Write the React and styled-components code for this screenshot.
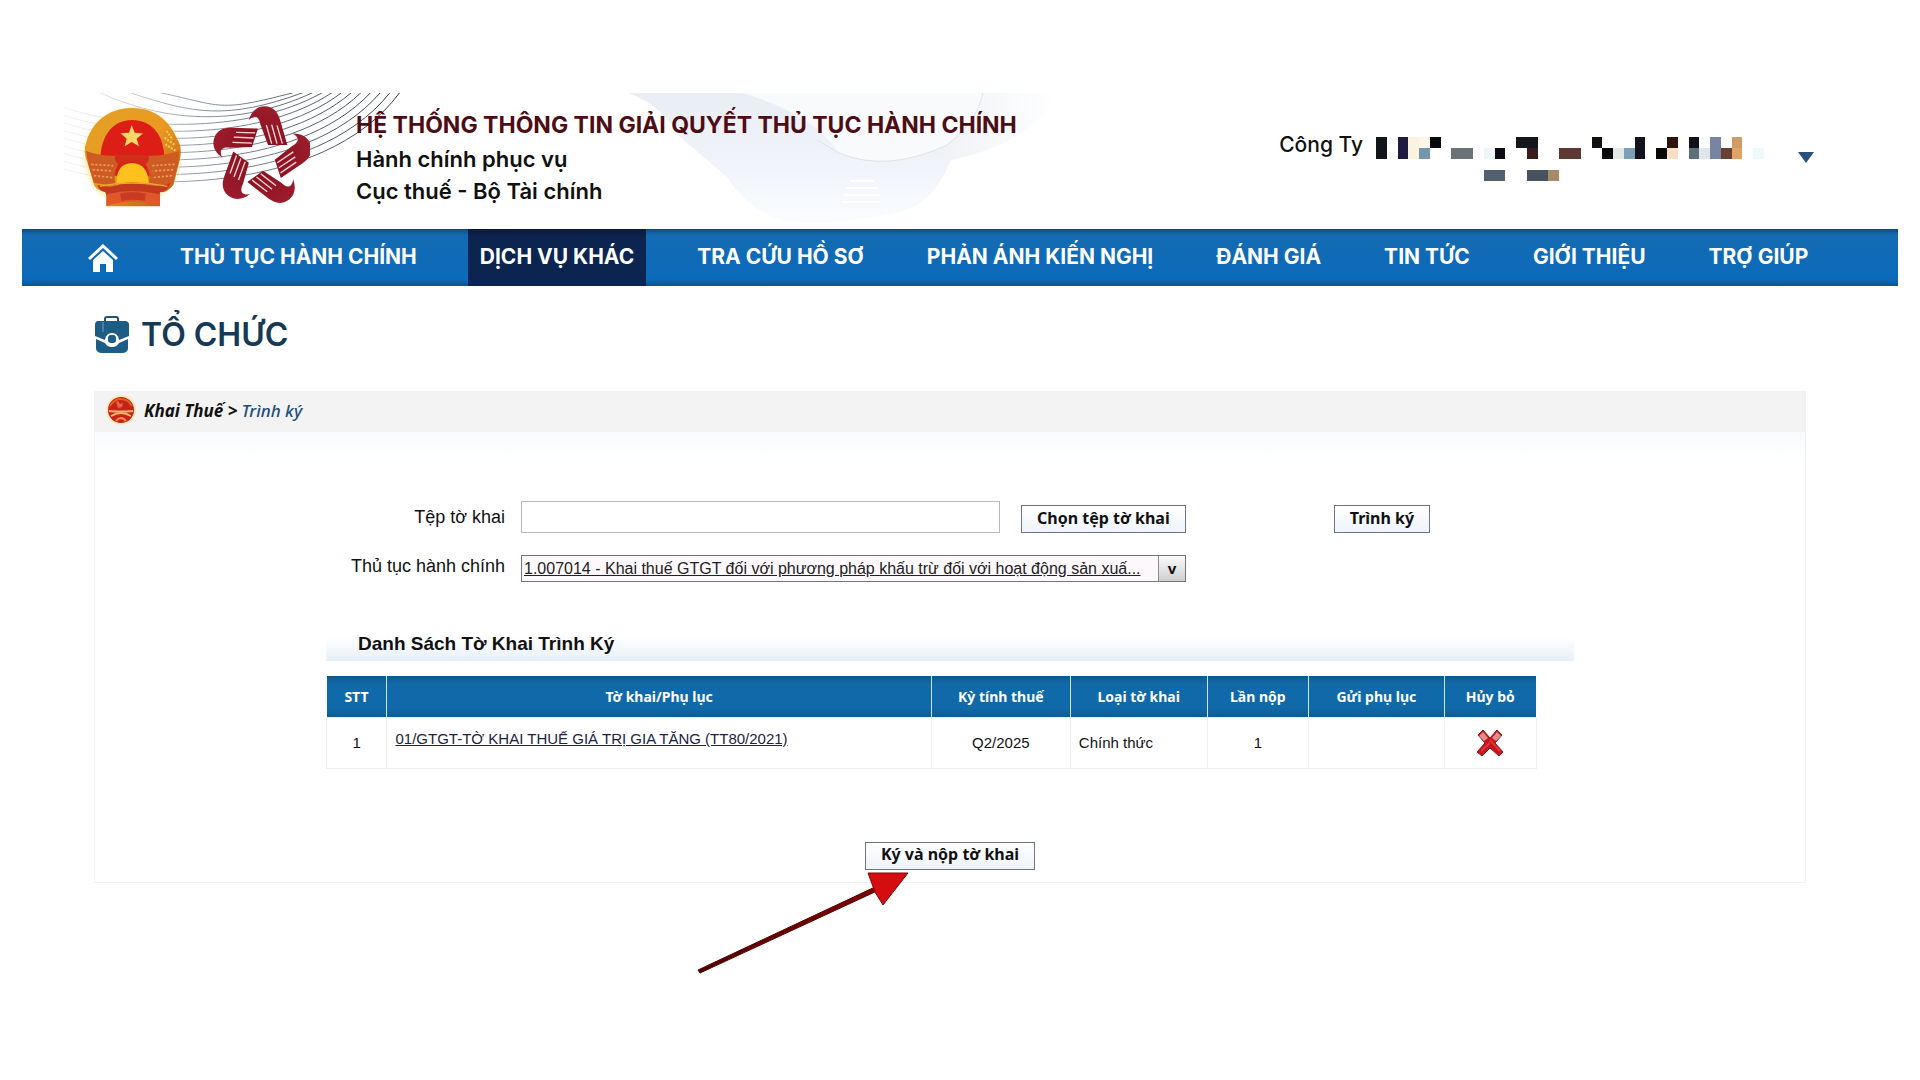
import React from 'react'
import styled, { createGlobalStyle } from "styled-components";

const menus = [
    "THỦ TỤC HÀNH CHÍNH",
    "DỊCH VỤ KHÁC",
    "TRA CỨU HỒ SƠ",
    "PHẢN ÁNH KIẾN NGHỊ",
    "ĐÁNH GIÁ",
    "TIN TỨC",
    "GIỚI THIỆU",
    "TRỢ GIÚP",
]

const columns = [
    { label: "STT", width: "5%" },
    { label: "Tờ khai/Phụ lục", width: "45%" },
    { label: "Kỳ tính thuế", width: "11.5%" },
    { label: "Loại tờ khai", width: "11.3%" },
    { label: "Lần nộp", width: "8.4%" },
    { label: "Gửi phụ lục", width: "11.2%" },
    { label: "Hủy bỏ", width: "7.6%" },
]

// [column, row, width, height, color]
const mosaic = [
    [0, 0, 1, 2, "#12151a"], [2, 0, 1, 2, "#1d1b42"], [3, 0, 1, 2, "#fbf3df"], [4, 0, 1, 1, "#fdf8ea"],
    [4, 1, 1, 1, "#7497ae"], [5, 0, 1, 1, "#08090c"], [7, 1, 2, 1, "#6a7276"], [10, 1, 1, 1, "#eff6f9"],
    [11, 1, 1, 1, "#0c0c12"], [13, 0, 2, 1, "#15151c"], [14, 1, 1, 1, "#3a1b1d"], [17, 1, 2, 1, "#5c3a33"],
    [20, 0, 1, 1, "#14100f"], [21, 1, 1, 1, "#08090c"], [22, 1, 1, 1, "#e3e8e4"], [23, 1, 1, 1, "#7d9fb8"],
    [24, 0, 1, 2, "#12131c"], [26, 1, 1, 1, "#0b0707"], [27, 0, 1, 1, "#2c1310"], [27, 1, 1, 1, "#fbdcc4"],
    [29, 0, 1, 1, "#0f1218"], [29, 1, 1, 1, "#5c6d7c"], [30, 1, 1, 1, "#dfe6ea"], [31, 0, 1, 2, "#7785a3"],
    [32, 1, 1, 1, "#6a4034"], [33, 0, 1, 1, "#cf9c66"], [33, 1, 1, 1, "#e0a468"], [35, 1, 1, 1, "#eef9fc"],
    [10, 3, 2, 1, "#526070"], [14, 3, 2, 1, "#47535f"], [16, 3, 1, 1, "#a88a66"],
]

function HeaderArt() {
    const lines = []
    for (let i = 0; i < 12; i++) {
        const y = 68 + i * 23
        const end = 700 + i * 29
        const x = i < 3 ? 300 - i * 90 : 10
        lines.push(`M${x} ${i < 3 ? 38 : y - 55} C${x + 190} ${y + 10} ${end - 230} ${y + 30} ${end} 38`)
    }
    return (
        <Art viewBox="0 0 1040 136" aria-hidden="true">
            <defs>
                <linearGradient id="wave" gradientUnits="userSpaceOnUse" x1="0" y1="0" x2="1020" y2="0">
                    <stop offset="0" stopColor="#c9ced6" stopOpacity="0.2" />
                    <stop offset="0.4" stopColor="#8f99a8" />
                    <stop offset="1" stopColor="#2f3a4c" />
                </linearGradient>
                <linearGradient id="swoosh" x1="0" y1="0" x2="0" y2="1">
                    <stop offset="0" stopColor="#e9eef4" />
                    <stop offset="0.6" stopColor="#f1f5fb" />
                    <stop offset="1" stopColor="#fafcff" />
                </linearGradient>
                <linearGradient id="edge" x1="0" y1="0" x2="1" y2="0">
                    <stop offset="0" stopColor="#eef1f5" />
                    <stop offset="1" stopColor="#fff" />
                </linearGradient>
            </defs>
            <g transform="translate(38 -13) scale(0.3333)" fill="none" stroke="url(#wave)" strokeWidth="3">
                {lines.map((d) => <path key={d} d={d} />)}
            </g>
            <path d="M606 0 H961 L925 52 L929 67 Q910 115 869 121 Q800 134 759 127 Q725 116 705 84 L658 44 Q640 12 606 0Z" fill="url(#swoosh)" />
            <path d="M961 0 H1036 Q1010 50 929 67 L910 60 Q955 30 961 0Z" fill="url(#edge)" />
            <path d="M720 0 H961 Q955 30 925 52 Q865 80 817 60 Q790 20 720 0Z" fill="#f8fafc" />
            <path d="M961 0 Q955 30 925 52 Q865 80 817 60 L795 47" fill="none" stroke="#dde4ea" />
            <path d="M828 88 H852 M824 95 H856 M822 102 H858 M820 109 H858" stroke="#fff" strokeWidth="2" />
        </Art>
    )
}

function Emblem() {
    return (
        <svg width="104" height="104" viewBox="58 72 312 312" role="img" aria-label="Quốc huy">
            <defs>
                <radialGradient id="halo">
                    <stop offset="0.75" stopColor="#ffe58a" />
                    <stop offset="1" stopColor="#ffe58a" stopOpacity="0" />
                </radialGradient>
                <linearGradient id="gold" x1="0" y1="0" x2="1" y2="1">
                    <stop offset="0" stopColor="#e2a127" />
                    <stop offset="0.5" stopColor="#ea9a1f" />
                    <stop offset="1" stopColor="#b9501c" />
                </linearGradient>
            </defs>
            <circle cx="214" cy="228" r="156" fill="url(#halo)" />
            <path d="M214 81 C290 80 330 128 350 175 C364 195 362 225 355 245 L338 312 Q320 335 298 334 V376 H136 V334 Q100 325 98 305 L82 248 Q64 215 78 180 C95 125 140 82 214 81Z" fill="url(#gold)" />
            <path d="M214 117 C272 117 306 160 310 218 L306 284 H116 L120 218 C126 158 160 117 214 117Z" fill="#dc1e17" />
            <path d="M213 132 L222 155 L247 157 L228 173 L235 196 L213 183 L192 196 L198 173 L180 157 L205 155Z" fill="#ffd766" />
            <path d="M76 210 Q120 226 166 224 L176 244 Q152 286 168 314 L100 306 L82 248Z" fill="#cf5a24" />
            <path d="M356 210 Q308 226 262 224 L252 244 Q276 286 262 314 L336 306 L352 248Z" fill="#cf5a24" />
            <path d="M92 250 L158 254 M96 266 L156 270 M100 284 L156 290 M342 250 L272 254 M338 266 L276 270 M334 284 L274 290" stroke="#e3a05a" strokeWidth="5" strokeDasharray="7 5" />
            <path d="M312 170 L342 192 M314 190 L346 210 M318 150 L336 176" stroke="#f6cf55" strokeWidth="6" strokeDasharray="6 4" />
            <path d="M168 306 Q166 248 214 246 Q262 248 264 306Z" fill="#ffc11e" />
            <path d="M164 222 L264 222 Q268 238 252 254 Q214 228 178 254 Q158 240 164 222Z" fill="#d32d19" />
            <path d="M110 312 Q160 322 176 310 Q214 298 256 310 Q290 322 330 306 Q322 330 298 334 L290 350 Q214 328 140 350 L134 334 Q112 328 110 312Z" fill="#c2391e" />
            <path d="M138 340 Q214 320 296 340 V372 Q214 352 138 374Z" fill="#e0562d" />
            <path d="M178 338 Q214 330 256 338 L252 360 Q214 352 182 360Z" fill="#c83a22" />
            <path d="M118 316 Q214 296 320 316" fill="none" stroke="#f0a33a" strokeWidth="4" />
        </svg>
    )
}

function HandsLogo() {
    return (
        <svg width="98" height="102" viewBox="-148 -156 294 306" role="img" aria-label="Dịch vụ công">
            <defs>
                <linearGradient id="hand" x1="0" y1="0" x2="0" y2="1">
                    <stop offset="0" stopColor="#9c1c2c" />
                    <stop offset="1" stopColor="#8c1220" />
                </linearGradient>
            </defs>
            {[0, 72, 144, 216, 288].map((deg) => (
                <g key={deg} transform={`rotate(${deg})`}>
                    <path d="M-38 -110 C-30 -138 -12 -152 10 -152 C38 -152 50 -132 56 -112 L78 -36 L20 -36 L-3 -98 C-5 -114 -14 -124 -24 -120 Q-32 -118 -38 -110Z" fill="url(#hand)" />
                    <path d="M15 -96 L31 -40 M31 -97 L47 -40 M47 -95 L63 -40" stroke="#ffd9d9" strokeWidth="4" />
                </g>
            ))}
        </svg>
    )
}

function App() {
    return (
        <>
            <GlobalStyle />
            <Page>
                <Header>
                    <HeaderArt />
                    <Brand>
                        <Emblem />
                        <HandsLogo />
                        <div className="brand-text">
                            <h1>HỆ THỐNG THÔNG TIN GIẢI QUYẾT THỦ TỤC HÀNH CHÍNH</h1>
                            <p>Hành chính phục vụ</p>
                            <p>Cục thuế - Bộ Tài chính</p>
                        </div>
                    </Brand>
                    <Account type="button" aria-label="Tài khoản Công Ty">
                        <span>Công Ty</span>
                        <svg className="masked" width="388" height="44" viewBox="0 0 36 4" preserveAspectRatio="none" shapeRendering="crispEdges">
                            {mosaic.map(([x, y, w, h, fill]) => (
                                <rect key={`${x}-${y}`} x={x} y={y} width={w} height={h} fill={fill} />
                            ))}
                        </svg>
                        <svg className="caret" width="16" height="12" viewBox="0 0 16 12">
                            <path d="M0 0 H16 L8 11Z" fill="#28527c" />
                        </svg>
                    </Account>
                </Header>
                <Nav>
                    <HomeLink href="#" aria-label="Trang chủ">
                        <svg width="30" height="28" viewBox="0 0 30 28">
                            <path d="M1 15 L15 2 L29 15" fill="none" stroke="#fff" strokeWidth="3" />
                            <path d="M15 7 L25 16 V28 H18 V20 H12 V28 H5 V16Z" fill="#fff" />
                        </svg>
                    </HomeLink>
                    {menus.map((menu, i) => (
                        <NavLink key={menu} href="#" $active={i === 1}>{menu}</NavLink>
                    ))}
                </Nav>
                <Title>
                    <svg width="36" height="38" viewBox="0 0 36 38" aria-hidden="true">
                        <path d="M11 6 V3 Q11 1 13 1 H22 Q24 1 24 3 V6" fill="none" stroke="#1d5577" strokeWidth="2" />
                        <path d="M4 5 H31 Q35 5 35 9 V20 L25 24 Q24 17 18 17 Q12 17 11 24 L1 20 V9 Q1 5 4 5Z" fill="#1d5c84" />
                        <path d="M2 23 L11 27 Q13 31 18 31 Q23 31 25 27 L34 23 V33 Q33 37 28 37 H8 Q3 37 2 33Z" fill="#1d5c84" />
                        <rect x="14" y="19" width="8" height="8" rx="3" fill="#1d5c84" />
                        <path d="M9 6 V16" stroke="#6fa3bf" />
                    </svg>
                    <h2>TỔ CHỨC</h2>
                </Title>
                <Panel>
                    <Breadcrumb>
                        <svg width="30" height="30" viewBox="0 0 30 30" aria-hidden="true">
                            <circle cx="15" cy="15" r="15" fill="#fde6b8" />
                            <circle cx="15" cy="15" r="13" fill="#c5231a" />
                            <path d="M4 11 Q9 3 15 4 Q22 4 26 11" fill="none" stroke="#e2601e" strokeWidth="2" />
                            <path d="M10 7 L12 6 L14 9 L17 8 L16 12 L12 13Z" fill="#e8663a" />
                            <path d="M3 16 Q15 17 27 16" fill="none" stroke="#ffb27a" strokeWidth="2" />
                            <path d="M5 21 Q15 15 25 21" fill="none" stroke="#ffb661" strokeWidth="2" />
                            <path d="M10 26 Q15 20 20 26" fill="none" stroke="#f2894a" strokeWidth="2" />
                        </svg>
                        <span className="parent">Khai Thuế &gt;</span>
                        <a href="#">Trình ký</a>
                    </Breadcrumb>
                    <Content>
                        <Inner>
                            <FormGrid>
                                <label htmlFor="file">Tệp tờ khai</label>
                                <FileRow>
                                    <input id="file" type="text" />
                                    <Button type="button">Chọn tệp tờ khai</Button>
                                    <Button type="button" className="sign">Trình ký</Button>
                                </FileRow>
                                <label htmlFor="procedure">Thủ tục hành chính</label>
                                <SelectBox>
                                    <select id="procedure">
                                        <option>1.007014 - Khai thuế GTGT đối với phương pháp khấu trừ đối với hoạt động sản xuấ...</option>
                                    </select>
                                    <span className="arrow">v</span>
                                </SelectBox>
                            </FormGrid>
                            <SectionBar>Danh Sách Tờ Khai Trình Ký</SectionBar>
                            <Table>
                                <thead>
                                    <tr>
                                        {columns.map((col) => (
                                            <Th key={col.label} $width={col.width}>{col.label}</Th>
                                        ))}
                                    </tr>
                                </thead>
                                <tbody>
                                    <tr>
                                        <td>1</td>
                                        <td className="name"><a href="#">01/GTGT-TỜ KHAI THUẾ GIÁ TRỊ GIA TĂNG (TT80/2021)</a></td>
                                        <td>Q2/2025</td>
                                        <td className="left">Chính thức</td>
                                        <td>1</td>
                                        <td></td>
                                        <td>
                                            <DeleteButton type="button" aria-label="Hủy bỏ">
                                                <svg width="28" height="28" viewBox="0 0 28 28">
                                                    <path d="M7 1 L14 9 L21 1 L26 6 L19 14 L27 23 L23 27 L14 19 L6 27 L1 23 L9 14 L2 6Z" fill="#c4161c" stroke="#8c1a1e" />
                                                    <path d="M7 3 L12 9 L8 12 L3 7Z M21 3 L25 7 L20 12 L16 9Z" fill="#df8f8c" />
                                                    <path d="M14 11 L24 22 M14 14 L5 22" stroke="#e0353a" strokeWidth="2" />
                                                </svg>
                                            </DeleteButton>
                                        </td>
                                    </tr>
                                </tbody>
                            </Table>
                            <Submit>
                                <Button type="button">Ký và nộp tờ khai</Button>
                                <svg className="pointer" width="214" height="102" viewBox="0 0 214 102" aria-hidden="true">
                                    <defs>
                                        <linearGradient id="shaft" x1="0" y1="1" x2="1" y2="0">
                                            <stop offset="0" stopColor="#4c0000" />
                                            <stop offset="1" stopColor="#7d0606" />
                                        </linearGradient>
                                    </defs>
                                    <path d="M1 98 L178 15 L180 19 L3 101Z" fill="url(#shaft)" stroke="#5c0202" />
                                    <path d="M171 1 H211 L186 33 L178 20Z" fill="#d50d10" stroke="#7a0808" />
                                </svg>
                            </Submit>
                        </Inner>
                    </Content>
                </Panel>
            </Page>
        </>
    )
}

const GlobalStyle = createGlobalStyle`
    * {
        box-sizing: border-box;
    }
    body {
        margin: 0;
        background: #fff;
        font-family: "Inter", sans-serif;
        color: #111;
    }
    h1, h2, p {
        margin: 0;
    }
`

const Page = styled.div`
    min-height: 100vh;
    padding: 93px 22px 0;
`

const Header = styled.header`
    position: relative;
    display: flex;
    justify-content: space-between;
    align-items: flex-start;
    min-height: 136px;
    padding: 0 84px 0 58px;
`

const Art = styled.svg`
    position: absolute;
    top: 0;
    left: 0;
    width: 1040px;
    height: 136px;
`

const Brand = styled.div`
    position: relative;
    display: flex;
    align-items: flex-start;
    padding-top: 12px;
    svg:first-child {
        margin-right: 28px;
    }
    .brand-text {
        margin-left: 46px;
    }
    h1 {
        padding-top: 2px;
        font-size: 23px;
        font-weight: 700;
        line-height: 36px;
        color: #4d0d14;
    }
    p {
        font-size: 22px;
        font-weight: 600;
        line-height: 32px;
    }
`

const Account = styled.button`
    position: relative;
    display: flex;
    align-items: flex-start;
    margin-top: 36px;
    padding: 0;
    border: 0;
    background: none;
    color: #111;
    font-family: inherit;
    font-size: 21px;
    font-weight: 500;
    line-height: 32px;
    cursor: pointer;
    .masked {
        margin: 8px 34px 0 13px;
    }
    .caret {
        margin-top: 23px;
    }
`

const Nav = styled.nav`
    display: flex;
    gap: 39px;
    height: 57px;
    padding: 0 75px 0 66px;
    background: linear-gradient(#0e4a80, #146bb1 6px, #0b6abb 50px, #0c538f);
`

const HomeLink = styled.a`
    display: flex;
    align-items: center;
    margin-right: 11px;
`

const NavLink = styled.a`
    display: flex;
    align-items: center;
    padding: 0 12px 2px;
    background: ${(props) => (props.$active ? "linear-gradient(#0a1a38, #0b2450 8px, #0b2450)" : "none")};
    color: #fff;
    font-size: 21px;
    font-weight: 700;
    white-space: nowrap;
    text-decoration: none;
`

const Title = styled.div`
    display: flex;
    align-items: center;
    gap: 11px;
    height: 105px;
    padding: 0 72px 8px;
    h2 {
        font-size: 32px;
        font-weight: 600;
        color: #163a56;
    }
`

const Panel = styled.main`
    margin: 0 92px 0 72px;
    border: 1px solid #f1f2f4;
    border-top: 0;
`

const Breadcrumb = styled.div`
    display: flex;
    align-items: center;
    height: 41px;
    padding: 0 11px 3px;
    background: #f3f3f4;
    font-family: "Noto Sans", sans-serif;
    font-size: 17px;
    font-style: italic;
    .parent {
        margin: 0 4px 0 8px;
        font-weight: 700;
    }
    a {
        color: #1d4e79;
        font-weight: 500;
        text-decoration: none;
    }
`

const Content = styled.div`
    padding: 69px 24px 12px;
    background: linear-gradient(#f7faff, #fff 28px);
`

const Inner = styled.div`
    max-width: 1248px;
    margin: 0 auto;
`

const FormGrid = styled.div`
    display: grid;
    grid-template-columns: 179px 1fr;
    column-gap: 16px;
    row-gap: 18px;
    align-items: center;
    label {
        font-family: "Liberation Sans", sans-serif;
        font-size: 18px;
        text-align: right;
    }
`

const FileRow = styled.div`
    display: flex;
    align-items: center;
    input {
        width: 479px;
        height: 32px;
        margin-right: 21px;
        padding: 0 6px;
        border: 1px solid #b9b9b9;
        font-size: 16px;
    }
    button {
        margin-top: 4px;
    }
    .sign {
        margin-left: 148px;
    }
`

const Button = styled.button`
    height: 28px;
    padding: 0 15px 3px;
    border: 1px solid #6e7480;
    background: linear-gradient(#fff, #eef4fb);
    color: #111;
    font-family: "Noto Sans", sans-serif;
    font-size: 16px;
    font-weight: 700;
    line-height: 22px;
    white-space: nowrap;
    cursor: pointer;
`

const SelectBox = styled.div`
    display: flex;
    width: 665px;
    height: 27px;
    margin-top: 4px;
    border: 1px solid #77737c;
    background: #fdf8fc;
    select {
        flex: 1;
        min-width: 0;
        padding: 0 2px;
        border: 0;
        appearance: none;
        background: none;
        color: #222;
        font-family: "Liberation Sans", sans-serif;
        font-size: 16px;
        text-decoration: underline;
    }
    .arrow {
        width: 27px;
        border-left: 1px solid #8d8d90;
        background: linear-gradient(#fafafa, #cfcfd1);
        font-family: "Noto Sans", sans-serif;
        font-size: 15px;
        font-weight: 700;
        line-height: 24px;
        text-align: center;
        pointer-events: none;
    }
`

const SectionBar = styled.h2`
    margin-top: 45px;
    padding-left: 32px;
    background: linear-gradient(#fff 30%, #e6eff9);
    font-family: "Liberation Sans", sans-serif;
    font-size: 19px;
    font-weight: 700;
    line-height: 34px;
`

const Table = styled.table`
    width: 97%;
    margin-top: 15px;
    border-collapse: collapse;
    table-layout: fixed;
    font-family: "Liberation Sans", sans-serif;
    font-size: 15px;
    td {
        height: 51px;
        padding: 0;
        border: 1px solid #eeeef1;
        text-align: center;
    }
    .left {
        padding: 0 8px;
        text-align: left;
    }
    .name {
        padding: 0 8px 8px;
        text-align: left;
    }
    a {
        color: #1c2340;
    }
`

const Th = styled.th`
    width: ${(props) => props.$width};
    height: 41px;
    padding: 0;
    background: linear-gradient(#0d588d, #1069a8 8px, #1069a8 32px, #0d5c94);
    color: #fff;
    font-family: "Noto Sans", sans-serif;
    font-size: 14px;
    font-weight: 700;
    & + & {
        border-left: 1px solid #cfe3f1;
    }
`

const DeleteButton = styled.button`
    padding: 4px 0 0;
    border: 0;
    background: none;
    vertical-align: middle;
    cursor: pointer;
`

const Submit = styled.div`
    position: relative;
    display: flex;
    justify-content: center;
    margin-top: 73px;
    .pointer {
        position: absolute;
        top: 30px;
        right: 50%;
        margin-right: 39px;
    }
`

export default App
